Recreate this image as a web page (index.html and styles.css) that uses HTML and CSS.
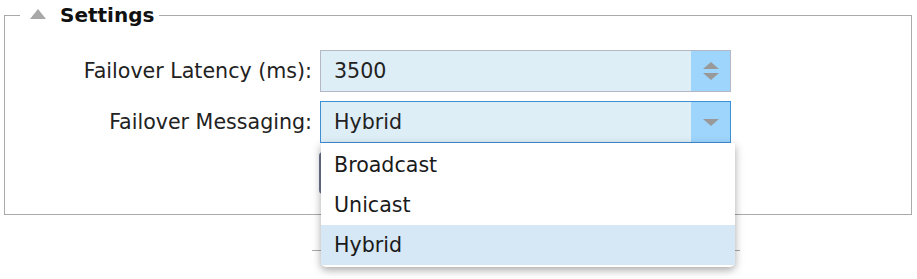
FILE: index.html
```html
<!DOCTYPE html>
<html>
<head>
    <meta charset='utf-8'>
    <title>Settings</title>
    <link rel="stylesheet" href="styles.css">
</head>
<body>
    <fieldset class="settings">
        <legend><span class="caret"></span>Settings</legend>
        <div class="form">
            <label>Failover Latency (ms):</label>
            <div class="field">
                <span class="value">3500</span>
                <span class="spin"><i class="up"></i><i class="down"></i></span>
            </div>

            <label>Failover Messaging:</label>
            <div class="field select">
                <span class="value">Hybrid</span>
                <span class="spin"><i class="down"></i></span>
                <ul class="popup">
                    <li>Broadcast</li>
                    <li>Unicast</li>
                    <li class="active">Hybrid</li>
                </ul>
            </div>

            <span></span>
            <div class="actions"><button></button></div>
        </div>
    </fieldset>
    <div class="below"></div>
</body>
</html>
```

FILE: styles.css
```css
* {
    box-sizing: border-box;
}

body {
    margin: 0;
    font-family: 'DejaVu Sans', sans-serif;
    color: #222;
    background: #fff;
    position: relative;
    height: 279px;
    overflow: hidden;
}

.settings {
    margin: 0 5px 0 4px;
    padding: 20px 0 20px 0;
    border: 1px solid #aaa;
    min-width: 0;
}

.settings legend {
    margin-left: 15px;
    padding: 0 5px 0 10px;
    height: 30px;
    line-height: 30px;
    font-size: 20px;
    font-weight: 700;
    color: #111;
    display: flex;
    align-items: center;
}

.caret {
    width: 0;
    height: 0;
    border-left: 8px solid transparent;
    border-right: 8px solid transparent;
    border-bottom: 10px solid #a8a8a8;
    margin-right: 14px;
    margin-top: -2px;
}

.form {
    display: grid;
    grid-template-columns: 306px 411px;
    column-gap: 8px;
    row-gap: 9px;
    margin-left: 1px;
}

.form label {
    text-align: right;
    font-size: 20.6px;
    line-height: 42px;
    height: 42px;
    white-space: nowrap;
}

.field {
    position: relative;
    height: 42px;
    border: 1px solid #b4b8c5;
    background: #deeef7;
    display: flex;
    align-items: center;
    font-size: 20.6px;
}

.field.select {
    border-color: #3f8fd5;
    z-index: 3;
}

.value {
    flex: 1;
    padding-left: 13px;
}

.spin {
    width: 39px;
    height: 100%;
    background: #9dd5fd;
    display: flex;
    flex-direction: column;
    align-items: center;
    justify-content: center;
    gap: 4px;
}

.spin i {
    width: 0;
    height: 0;
    border-left: 8px solid transparent;
    border-right: 8px solid transparent;
}

.spin .up {
    border-bottom: 7px solid #999;
}

.spin .down {
    border-top: 7px solid #999;
}

.popup {
    position: absolute;
    top: 41px;
    left: 0;
    width: 414px;
    margin: 0;
    padding: 2px 0;
    list-style: none;
    background: #fff;
    border-radius: 0 0 5px 5px;
    box-shadow: 0 3px 9px rgba(0, 0, 0, 0.35);
}

.popup li {
    height: 40px;
    line-height: 40px;
    padding-left: 13px;
    color: #1a1a1a;
}

.popup li.active {
    background: #d6e8f5;
}

.actions {
    height: 42px;
    margin-left: -1px;
}

.actions button {
    height: 42px;
    width: 150px;
    border: 0;
    border-radius: 4px;
    background: #6e7591;
}

.below {
    position: absolute;
    left: 312px;
    top: 221px;
    width: 428px;
    height: 58px;
    background: #fff;
    z-index: 2;
}

.below::after {
    content: "";
    position: absolute;
    left: 0;
    right: 0;
    top: 29px;
    border-top: 1px solid #aaa;
}
```
